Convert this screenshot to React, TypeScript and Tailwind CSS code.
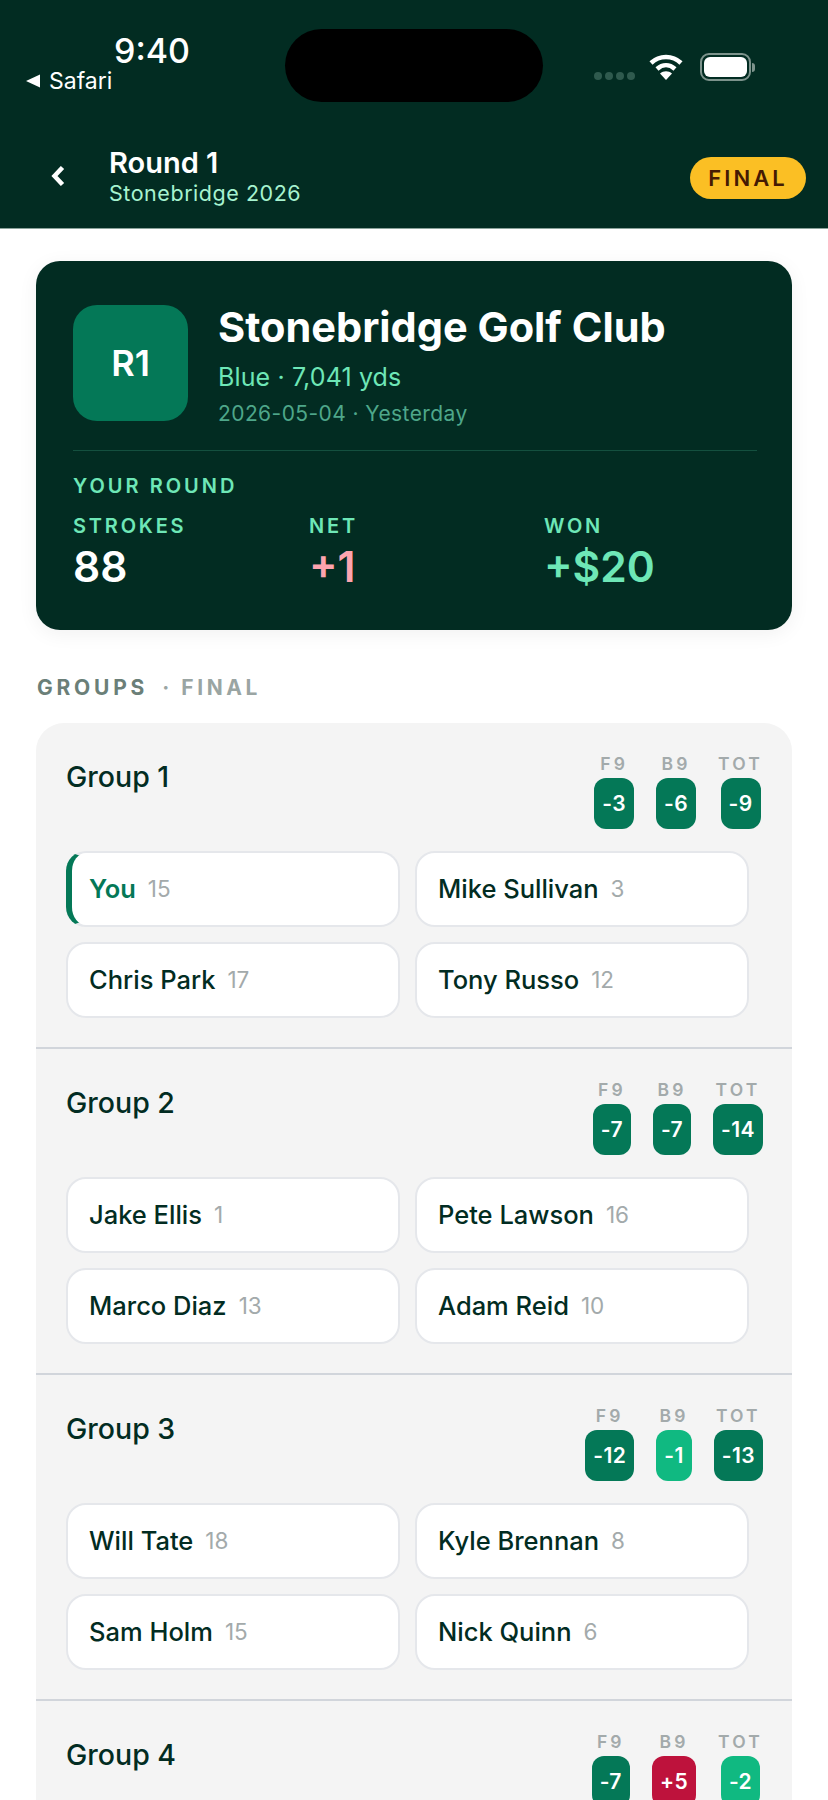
const FONT = "font-['Inter',sans-serif]"

type Score = { label: string; value: string; tone: 'dark' | 'light' | 'red' }
type Player = { name: string; hcp: number; you?: boolean }
type Group = { title: string; scores: Score[]; players: Player[] }

const score = (label: string, value: string, tone: Score['tone'] = 'dark'): Score => ({ label, value, tone })

const groups: Group[] = [
  {
    title: 'Group 1',
    scores: [score('F9', '-3'), score('B9', '-6'), score('TOT', '-9')],
    players: [
      { name: 'You', hcp: 15, you: true },
      { name: 'Mike Sullivan', hcp: 3 },
      { name: 'Chris Park', hcp: 17 },
      { name: 'Tony Russo', hcp: 12 },
    ],
  },
  {
    title: 'Group 2',
    scores: [score('F9', '-7'), score('B9', '-7'), score('TOT', '-14')],
    players: [
      { name: 'Jake Ellis', hcp: 1 },
      { name: 'Pete Lawson', hcp: 16 },
      { name: 'Marco Diaz', hcp: 13 },
      { name: 'Adam Reid', hcp: 10 },
    ],
  },
  {
    title: 'Group 3',
    scores: [score('F9', '-12'), score('B9', '-1', 'light'), score('TOT', '-13')],
    players: [
      { name: 'Will Tate', hcp: 18 },
      { name: 'Kyle Brennan', hcp: 8 },
      { name: 'Sam Holm', hcp: 15 },
      { name: 'Nick Quinn', hcp: 6 },
    ],
  },
  {
    title: 'Group 4',
    scores: [score('F9', '-7'), score('B9', '+5', 'red'), score('TOT', '-2', 'light')],
    players: [],
  },
]

const toneClass = {
  dark: 'bg-[#047857]',
  light: 'bg-[#10b981]',
  red: 'bg-[#be123c]',
}

function StatusBar() {
  return (
    <div className="flex h-[146px] items-start">
      <div className="ml-[26px] mt-[31px] w-[259px]">
        <div className="ml-[88px] text-[34px] leading-[40px] font-medium text-white">9:40</div>
        <div className="-mt-[2px] flex items-center gap-[9px] text-[23px] leading-[24px] text-white">
          <svg width="14" height="14" viewBox="0 0 14 14" fill="#fff">
            <path d="M14 0.5V13.5L0 7Z" />
          </svg>
          Safari
        </div>
      </div>
      <div className="mt-[29px] h-[73px] w-[258px] rounded-full bg-black" />
      <div className="ml-[51px] mt-[53px] flex items-end">
        <div className="mb-[1px] flex gap-[3px]">
          {[0, 1, 2, 3].map((i) => (
            <span key={i} className="h-[8px] w-[8px] rounded-full bg-[#2f5a4e]" />
          ))}
        </div>
        <svg className="mb-[1px] ml-[14px]" width="34" height="26" viewBox="0 0 34 26" fill="none">
          <path d="M2 9C10.5 1 23.5 1 32 9" stroke="#fff" strokeWidth="4.5" />
          <path d="M8 15C13.5 10 20.5 10 26 15" stroke="#fff" strokeWidth="4.5" />
          <path d="M17 26L11 19.5C14.5 16.5 19.5 16.5 23 19.5Z" fill="#fff" />
        </svg>
        <div className="ml-[17px] flex items-center">
          <div className="h-[28px] w-[51px] rounded-[9px] border-2 border-[#7d938c] p-[2px]">
            <div className="h-full w-full rounded-[6px] bg-white" />
          </div>
          <div className="ml-[1px] h-[9px] w-[3px] rounded-r-full bg-[#7d938c]" />
        </div>
      </div>
    </div>
  )
}

function ScoreColumn({ item }: { item: Score }) {
  return (
    <div className="flex flex-col items-center">
      <span className="text-[17.5px] leading-[19px] font-semibold tracking-[0.18em] text-[#a3aaab]">{item.label}</span>
      <span className={`mt-[5px] flex h-[51px] items-center rounded-[12px] px-[8px] text-[21px] font-semibold tracking-[0.02em] text-white ${toneClass[item.tone]}`}>
        {item.value}
      </span>
    </div>
  )
}

function PlayerChip({ player }: { player: Player }) {
  return (
    <div
      className={`flex h-[76px] items-center gap-[12px] rounded-[20px] border-2 bg-white ${
        player.you ? 'border-[#e5e7eb] border-l-[6px] border-l-[#047857] pl-[17px]' : 'border-[#e5e7eb] pl-[21px]'
      }`}
    >
      <span className={`text-[25.5px] font-medium ${player.you ? 'font-semibold text-[#047857]' : 'text-[#022c22]'}`}>{player.name}</span>
      <span className="text-[22.5px] text-[#a3aaab]">{player.hcp}</span>
    </div>
  )
}

function GroupBlock({ group }: { group: Group }) {
  return (
    <div className="h-[326px] border-b-2 border-[#d1d5db] pl-[30px] pr-[29px]">
      <div className="flex items-start justify-between pt-[31px]">
        <h3 className="mt-[2px] text-[28.5px] leading-[42px] font-medium text-[#022c22]">{group.title}</h3>
        <div className="flex gap-[22px]">
          {group.scores.map((s) => (
            <ScoreColumn key={s.label} item={s} />
          ))}
        </div>
      </div>
      <div className="mt-[22px] grid w-[683px] grid-cols-2 gap-x-[15px] gap-y-[15px]">
        {group.players.map((p) => (
          <PlayerChip key={p.name} player={p} />
        ))}
      </div>
    </div>
  )
}

function Stat({ label, value, color }: { label: string; value: string; color: string }) {
  return (
    <div>
      <div className="text-[20px] leading-[23px] font-semibold tracking-[0.14em] text-[#6ee7b7]">{label}</div>
      <div className={`mt-[4px] text-[42.5px] leading-[50px] font-semibold ${color}`}>{value}</div>
    </div>
  )
}

export default function App() {
  return (
    <div className={`h-[1800px] w-[828px] overflow-hidden bg-white ${FONT}`}>
      <header className="h-[229px] border-b border-[#8aa39b] bg-[#022c22]">
        <StatusBar />
        <div className="flex items-center pr-[22px]">
          <svg className="ml-[51px]" width="14" height="20" viewBox="0 0 14 20" fill="none">
            <path d="M11.5 1.5L3.5 10L11.5 18.5" stroke="#fff" strokeWidth="4.5" />
          </svg>
          <div className="ml-[44px] flex-1">
            <div className="text-[29px] leading-[34px] font-semibold text-white">Round 1</div>
            <div className="text-[21.5px] leading-[26px] tracking-[0.025em] text-[#a7f3d0]">Stonebridge 2026</div>
          </div>
          <span className="mt-[4px] flex h-[42px] w-[116px] items-center justify-center rounded-full bg-[#fbbf24] text-[22px] font-semibold tracking-[0.14em] text-[#451a03]">
            FINAL
          </span>
        </div>
      </header>

      <main className="px-[36px] pt-[32px]">
        <section className="h-[369px] rounded-[24px] bg-[#022c22] pl-[37px] pr-[35px] pt-[44px] shadow-[0_4px_20px_rgba(0,0,0,0.06)]">
          <div className="flex h-[116px]">
            <div className="flex h-[116px] w-[115px] items-center justify-center rounded-[24px] bg-[#047857] text-[36px] font-semibold text-white">
              R1
            </div>
            <div className="ml-[30px]">
              <h1 className="-mt-[3px] text-[41.5px] leading-[50px] font-bold text-white">Stonebridge Golf Club</h1>
              <div className="mt-[10px] text-[25px] leading-[30px] tracking-[0.005em] text-[#6ee7b7]">Blue · 7,041 yds</div>
              <div className="mt-[9px] text-[21px] leading-[26px] tracking-[0.02em] text-[#4ea78a]">2026-05-04 · Yesterday</div>
            </div>
          </div>
          <div className="mt-[29px] h-px bg-[#14503f]" />
          <div className="mt-[23px] text-[20px] leading-[24px] font-semibold tracking-[0.15em] text-[#6ee7b7]">YOUR ROUND</div>
          <div className="mt-[17px] grid grid-cols-[236px_235px_1fr]">
            <Stat label="STROKES" value="88" color="text-white" />
            <Stat label="NET" value="+1" color="text-[#fda4af]" />
            <Stat label="WON" value="+$20" color="text-[#6ee7b7]" />
          </div>
        </section>

        <div className="ml-[1px] mt-[46px] flex gap-[14px] text-[21px] leading-[24px] font-bold tracking-[0.17em]">
          <span className="tracking-[0.18em] text-[#6b7f78]">GROUPS</span>
          <span className="text-[#9aa5a3]">· FINAL</span>
        </div>

        <section className="mt-[23px] rounded-t-[28px] bg-[#f4f4f4]">
          {groups.map((g) => (
            <GroupBlock key={g.title} group={g} />
          ))}
        </section>
      </main>
    </div>
  )
}
